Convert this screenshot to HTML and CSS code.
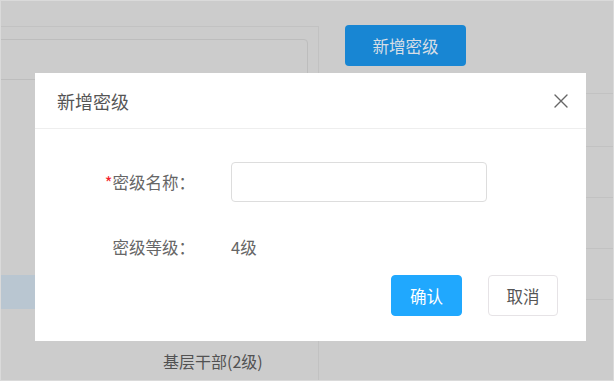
FILE: index.html
```html
<!DOCTYPE html>
<html lang="zh-CN">
<head>
<meta charset="utf-8">
<title>新增密级</title>
<link rel="stylesheet" href="styles.css">
</head>
<body>
<div class="page">
  <aside class="tree">
    <div class="search"></div>
    <div class="tree-list">
      <div class="tree-row"></div>
      <div class="tree-row"></div>
      <div class="tree-row"></div>
      <div class="tree-row"></div>
      <div class="tree-row"></div>
      <div class="tree-row active"></div>
      <div class="tree-row"></div>
      <div class="tree-row"><span class="tree-text">基层干部(2级)</span></div>
    </div>
  </aside>
  <main class="content">
    <button class="btn-add" type="button">新增密级</button>
    <div class="table">
      <div class="table-row head"></div>
      <div class="table-row"></div>
      <div class="table-row"></div>
      <div class="table-row"></div>
    </div>
  </main>
</div>

<div class="modal">
  <div class="modal-header">
    <span class="modal-title">新增密级</span>
    <svg class="close" width="14" height="14" viewBox="0 0 14 14" aria-label="关闭">
      <path d="M1 1 L13 13 M13 1 L1 13" stroke="#666" stroke-width="1.4" fill="none" stroke-linecap="round"/>
    </svg>
  </div>
  <div class="modal-body">
    <div class="form-row">
      <label class="form-label"><span class="req">*</span>密级名称：</label>
      <input class="form-input" type="text">
    </div>
    <div class="form-row second">
      <span class="form-label">密级等级：</span>
      <span class="form-value">4级</span>
    </div>
    <div class="actions">
      <button class="btn primary" type="button">确认</button>
      <button class="btn plain" type="button">取消</button>
    </div>
  </div>
</div>
</body>
</html>
```

FILE: styles.css
```css
* { box-sizing: border-box; }

html, body { margin: 0; padding: 0; }

body {
  width: 614px;
  height: 381px;
  overflow: hidden;
  background: #cccccc;
  border: 1px solid #dadada;
  font-family: "Noto Sans CJK SC", "Noto Sans", sans-serif;
  position: relative;
}

.page {
  display: flex;
  height: 100%;
}

.tree {
  width: 318px;
  margin-top: 25px;
  border-top: 1px solid #c2c2c2;
  border-right: 1px solid #c2c2c2;
  display: flex;
  flex-direction: column;
}

.search {
  margin: 12px 10px 0 -8px;
  height: 41px;
  border: 1px solid #bdbdbd;
  border-radius: 4px;
}

.tree-list {
  margin-top: 25px;
  display: flex;
  flex-direction: column;
}

.tree-row {
  height: 34px;
  display: flex;
  align-items: center;
  padding-left: 162px;
}

.tree-row.active { background: #b9c6d1; }

.tree-text {
  font-size: 16px;
  color: #525252;
  margin-top: 2px;
}

.content {
  flex: 1;
  padding-top: 24px;
  padding-left: 26px;
  display: flex;
  flex-direction: column;
}

.btn-add {
  width: 121px;
  height: 41px;
  border: none;
  border-radius: 4px;
  background: #1886d3;
  color: #d6dee6;
  font-family: inherit;
  font-size: 16.5px;
  padding: 0;
}

.table {
  margin-top: 27px;
  margin-left: -26px;
  border-top: 1px solid #c2c2c2;
}

.table-row {
  height: 51px;
  border-bottom: 1px solid #c2c2c2;
}

.table-row.head { height: 53px; }

/* modal */
.modal {
  position: absolute;
  left: 34px;
  top: 72px;
  width: 551px;
  height: 268px;
  background: #ffffff;
  display: flex;
  flex-direction: column;
}

.modal-header {
  height: 56px;
  border-bottom: 1px solid #eeeeee;
  display: flex;
  align-items: center;
  justify-content: space-between;
  padding: 0 18px 0 22px;
}

.modal-title {
  font-size: 18px;
  color: #555555;
}

.close { display: block; }

.modal-body {
  padding-top: 33px;
  display: flex;
  flex-direction: column;
}

.form-row {
  display: flex;
  align-items: center;
  height: 40px;
}

.form-row.second {
  margin-top: 25px;
}

.form-label {
  width: 160px;
  text-align: right;
  font-size: 16.5px;
  color: #666666;
  margin-right: 36px;
}

.req { color: #f5222d; }

.form-input {
  width: 256px;
  height: 40px;
  border: 1px solid #dddddd;
  border-radius: 4px;
  outline: none;
  background: #fff;
}

.form-value {
  font-size: 16.5px;
  color: #666666;
}

.actions {
  margin-top: 8px;
  display: flex;
  justify-content: flex-end;
  gap: 26px;
  padding-right: 28px;
}

.btn {
  height: 41px;
  border-radius: 4px;
  font-family: inherit;
  font-size: 16.5px;
  padding: 0;
}

.btn.primary {
  width: 71px;
  background: #20a8fe;
  border: 1px solid #20a8fe;
  color: #ffffff;
}

.btn.plain {
  width: 70px;
  background: #ffffff;
  border: 1px solid #e6e3e6;
  color: #555555;
}
```
